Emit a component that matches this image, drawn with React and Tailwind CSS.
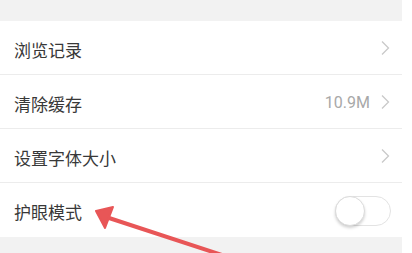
import React from 'react';

const Chevron = () => (
  <svg width="10" height="16" viewBox="0 0 10 16" className="shrink-0">
    <path d="M2 1.5 L8.5 8 L2 14.5" fill="none" stroke="#c9c9c9" strokeWidth="1.3" />
  </svg>
);

const Row = ({ label, children, last }) => (
  <div
    className={`flex h-[54px] items-center justify-between pl-[14px] pr-[12px] ${
      last ? '' : 'border-b border-[#ececec]'
    }`}
  >
    <span className="mt-[3px] text-[17px] leading-none text-[#383838]">{label}</span>
    <div className="flex items-center gap-[10px]">{children}</div>
  </div>
);

const Toggle = () => (
  <div className="relative h-[30px] w-[56px] rounded-full border border-[#e3e3e3] bg-white">
    <div className="absolute left-[-1px] top-[-1px] h-[30px] w-[30px] rounded-full border border-[#dcdcdc] bg-white shadow-[0_2px_3px_rgba(0,0,0,0.18)]" />
  </div>
);

export default function App() {
  return (
    <div
      className="relative h-[253px] w-[412px] overflow-hidden bg-white"
      style={{ fontFamily: '"Noto Sans CJK SC", "Noto Sans", sans-serif' }}
    >
      <div className="flex h-full w-[402px] flex-col">
        <div className="h-[21px] bg-[#f2f2f2]" />
        <Row label="浏览记录">
          <Chevron />
        </Row>
        <Row label="清除缓存">
          <span className="mt-[2px] text-[16px] leading-none text-[#a8a8a8]" style={{ fontFamily: 'Roboto, sans-serif' }}>
            10.9M
          </span>
          <Chevron />
        </Row>
        <Row label="设置字体大小">
          <Chevron />
        </Row>
        <Row label="护眼模式" last>
          <div className="mr-[-1px] mt-[2px]">
            <Toggle />
          </div>
        </Row>
        <div className="flex-1 bg-[#f2f2f2]" />
      </div>

      <svg className="pointer-events-none absolute left-0 top-0" width="412" height="253" viewBox="0 0 412 253">
        <line x1="106" y1="217" x2="225" y2="256" stroke="#e85657" strokeWidth="4" strokeLinecap="round" />
        <polygon points="96,211 113,207 105,228" fill="#e85657" stroke="#e85657" strokeWidth="2" strokeLinejoin="round" />
      </svg>
    </div>
  );
}
